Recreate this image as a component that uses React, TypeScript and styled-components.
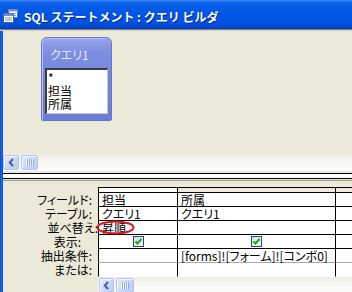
import React from "react";
import styled, { createGlobalStyle } from "styled-components";

const Global = createGlobalStyle`
  html, body { margin: 0; padding: 0; overflow: hidden; background: #ece9d8; }
  * { box-sizing: border-box; }
`;

const FONT = `"Noto Sans CJK JP", "Noto Sans", sans-serif`;

const Window = styled.div`
  width: 352px;
  height: 292px;
  display: flex;
  flex-direction: column;
  overflow: hidden;
  font-family: ${FONT};
  font-size: 12px;
  color: #000;
`;

const TitleBar = styled.div`
  height: 29px;
  flex: none;
  display: flex;
  align-items: center;
  gap: 6px;
  padding: 3px 0 0 3px;
  background: linear-gradient(
    #3c8df8 0px,
    #1466ee 2px,
    #0a5ee9 4px,
    #0058e6 12px,
    #0053e1 22px,
    #004bd6 26px,
    #003fbf 29px
  );
  color: #fff;
  font-weight: bold;
  font-size: 12px;
  text-shadow: 1px 1px 0 #0a2a8c;
  white-space: nowrap;
`;

const TitleSep = styled.div`
  height: 2px;
  flex: none;
  border-top: 1px solid #7d7d7d;
  background: #d6d3c6;
`;

const Body = styled.div`
  flex: 1;
  display: flex;
  min-height: 0;
`;

const Frame = styled.div`
  width: 3px;
  flex: none;
  background: linear-gradient(90deg, #0a50d6, #1f64e6 2px, #0047c8);
`;

const Content = styled.div`
  flex: 1;
  display: flex;
  flex-direction: column;
  background: #ece9d8;
  min-width: 0;
`;

const UpperPane = styled.div`
  height: 123px;
  flex: none;
  padding: 6px 0 0 38px;
`;

const TableBox = styled.div`
  width: 71px;
  height: 84px;
  display: flex;
  flex-direction: column;
  padding: 0 3px 6px 3px;
  border: 1px solid #6676cf;
  border-radius: 6px 6px 2px 2px;
  background: linear-gradient(#97a5ec 0px, #7e8fe2 14px, #7385dc 40px, #6a7cd6);
  box-shadow: inset 1px 1px 0 #b7c0f3;
`;

const BoxTitle = styled.div`
  height: 30px;
  flex: none;
  padding: 10px 0 0 5px;
  color: #e4e8fb;
  font-feature-settings: "palt";
  line-height: 14px;
`;

const FieldList = styled.div`
  flex: 1;
  background: #fff;
  border-top: 2px solid #3c3c3c;
  border-left: 2px solid #3c3c3c;
  border-right: 1px solid #c9c6bb;
  border-bottom: 1px solid #c9c6bb;
  padding: 1px 0 0 1px;
`;

const FieldItem = styled.div`
  height: 13px;
  line-height: 13px;
  white-space: nowrap;
`;

const HScroll = styled.div<{ $lead: number }>`
  height: 17px;
  flex: none;
  display: flex;
  align-items: center;
  gap: 2px;
  padding-left: ${(p) => p.$lead}px;
  background: linear-gradient(#ecebe3, #f7f6f1 6px, #fdfdfb);
`;

const ScrollBtn = styled.div<{ $w: number }>`
  width: ${(p) => p.$w}px;
  height: 15px;
  flex: none;
  display: flex;
  align-items: center;
  justify-content: center;
  border: 1px solid #b3c6f3;
  border-radius: 2px;
  background: linear-gradient(135deg, #e3ebfe, #c6d6fc 60%, #b9cbf7);
  box-shadow: inset 1px 1px 0 #f4f7ff;
`;

const Grip = styled.div`
  width: 8px;
  height: 7px;
  background: repeating-linear-gradient(
    90deg,
    #f3f6ff 0px,
    #f3f6ff 1px,
    #8eaaf0 1px,
    #8eaaf0 2px
  );
`;

const Splitter = styled.div`
  height: 6px;
  flex: none;
  margin-top: 2px;
  border-top: 1px solid #000;
  border-bottom: 1px solid #000;
  background: #fff;
`;

const PaneEdge = styled.div`
  height: 2px;
  flex: none;
  border-bottom: 1px solid #9c998c;
  margin-bottom: 6px;
`;

const GridRow = styled.div<{ $h: number }>`
  position: relative;
  display: grid;
  grid-template-columns: 95px 79px 158px 1fr;
  height: ${(p) => p.$h}px;
  flex: none;
`;

const Label = styled.div<{ $pr: number }>`
  text-align: right;
  padding-right: ${(p) => p.$pr}px;
  line-height: 13px;
  white-space: nowrap;
  font-feature-settings: "palt";
`;

const Cell = styled.div<{ $line: string }>`
  border-left: 1px solid #000;
  border-bottom: 1px solid ${(p) => p.$line};
  background: #fff;
  padding-left: 3px;
  line-height: 13px;
  white-space: nowrap;
  font-feature-settings: "palt";
  display: flex;
  align-items: center;
`;

const CenterCell = styled(Cell)`
  justify-content: center;
  padding-left: 0;
`;

const SelCell = styled.div<{ $on?: boolean }>`
  border-top: 1px solid #000;
  border-bottom: 1px solid #000;
  border-left: 1px solid #000;
  background: ${(p) => (p.$on ? "#fff" : "#ece9d8")};
`;

const Check = styled.div`
  width: 11px;
  height: 11px;
  border: 1px solid #1c5180;
  background: linear-gradient(135deg, #dcdcd5, #fbfbf9);
  display: flex;
  align-items: center;
  justify-content: center;
`;

const Ellipse = styled.svg`
  position: absolute;
  left: 93px;
  top: -1px;
  width: 39px;
  height: 15px;
  overflow: visible;
  pointer-events: none;
`;

const BottomRow = styled.div`
  display: grid;
  grid-template-columns: 95px 1fr;
  flex: 1;
`;

const Arrow = () => (
  <svg width="7" height="9" viewBox="0 0 7 9">
    <polyline points="5,1 1.8,4.5 5,8" fill="none" stroke="#4d6185" strokeWidth="2" />
  </svg>
);

const Scroll = ({ lead, btn, thumb }: { lead: number; btn: number; thumb: number }) => (
  <HScroll $lead={lead}>
    <ScrollBtn $w={btn}>
      <Arrow />
    </ScrollBtn>
    <ScrollBtn $w={thumb}>
      <Grip />
    </ScrollBtn>
  </HScroll>
);

const QueryIcon = () => (
  <svg width="15" height="14" viewBox="0 0 15 14">
    <rect x="5.5" y="0.5" width="9" height="8" fill="#fff" stroke="#5a6f9a" />
    <rect x="5.5" y="0.5" width="9" height="2" fill="#7d9ad8" />
    <line x1="7" y1="4.5" x2="13" y2="4.5" stroke="#8a9bbf" />
    <line x1="7" y1="6.5" x2="13" y2="6.5" stroke="#8a9bbf" />
    <rect x="0.5" y="4.5" width="10" height="9" fill="#fff" stroke="#4c5f88" />
    <rect x="0.5" y="4.5" width="10" height="2.5" fill="#6d8cd2" />
    <line x1="2" y1="9" x2="9" y2="9" stroke="#7f90b6" />
    <line x1="2" y1="11" x2="9" y2="11" stroke="#7f90b6" />
  </svg>
);

const CheckMark = () => (
  <svg width="9" height="9" viewBox="0 0 9 9">
    <polyline points="1.5,4.5 3.5,6.5 7.5,2" fill="none" stroke="#21a121" strokeWidth="2" />
  </svg>
);

type Row = { label: string; pr: number; c1: React.ReactNode; c2: React.ReactNode; line: string };

const rows: Row[] = [
  { label: "フィールド:", pr: 6, c1: "担当", c2: "所属", line: "#000" },
  { label: "テーブル:", pr: 6, c1: "クエリ1", c2: "クエリ1", line: "#000" },
  { label: "並べ替え:", pr: 0, c1: "昇順", c2: "", line: "#000" },
  { label: "表示:", pr: 17, c1: "check", c2: "check", line: "#000" },
  { label: "抽出条件:", pr: 6, c1: "", c2: "[forms]![フォーム]![コンボ0]", line: "#a8a8a8" },
  { label: "または:", pr: 6, c1: "", c2: "", line: "transparent" },
];

const renderCell = (v: React.ReactNode, line: string) =>
  v === "check" ? (
    <CenterCell $line={line}>
      <Check>
        <CheckMark />
      </Check>
    </CenterCell>
  ) : (
    <Cell $line={line}>{v}</Cell>
  );

export default function App() {
  return (
    <>
      <Global />
      <Window>
        <TitleBar>
          <QueryIcon />
          <span>SQL ステートメント : クエリ ビルダ</span>
        </TitleBar>
        <TitleSep />
        <Body>
          <Frame />
          <Content>
            <UpperPane>
              <TableBox>
                <BoxTitle>クエリ1</BoxTitle>
                <FieldList>
                  <FieldItem>*</FieldItem>
                  <FieldItem>担当</FieldItem>
                  <FieldItem>所属</FieldItem>
                </FieldList>
              </TableBox>
            </UpperPane>
            <Scroll lead={0} btn={16} thumb={17} />
            <Splitter />
            <PaneEdge />
            <GridRow $h={6}>
              <div />
              <SelCell $on />
              <SelCell />
              <SelCell />
            </GridRow>
            {rows.map((r, i) => (
              <GridRow $h={14} key={i}>
                <Label $pr={r.pr}>{r.label}</Label>
                {renderCell(r.c1, r.line)}
                {renderCell(r.c2, r.line)}
                <Cell $line={r.line} />
                {i === 2 && (
                  <Ellipse viewBox="0 0 39 15">
                    <ellipse cx="19.5" cy="7.5" rx="18" ry="6" fill="none" stroke="#e5141b" strokeWidth="2" />
                  </Ellipse>
                )}
              </GridRow>
            ))}
            <BottomRow>
              <div />
              <Scroll lead={1} btn={15} thumb={18} />
            </BottomRow>
          </Content>
        </Body>
      </Window>
    </>
  );
}
